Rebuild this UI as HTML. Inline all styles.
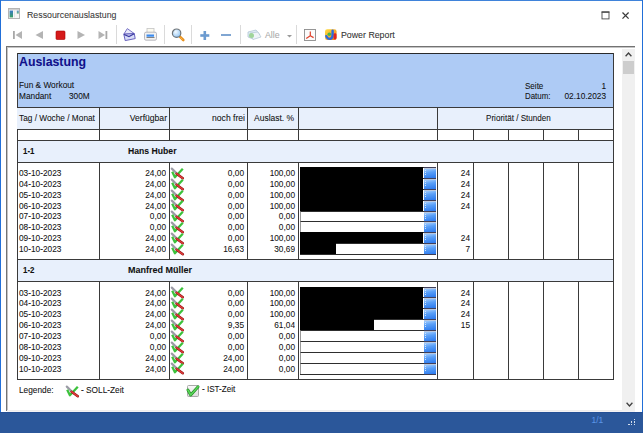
<!DOCTYPE html>
<html><head><meta charset="utf-8"><style>
html,body{margin:0;padding:0;}
body{width:643px;height:433px;overflow:hidden;background:#fff;position:relative;font-family:"Liberation Sans",sans-serif;color:#111;}
div{position:absolute;}
.t{white-space:pre;line-height:1;-webkit-text-stroke:0.07px currentColor;}
svg{position:absolute;overflow:visible;}
</style></head><body>
<div style="left:0px;top:0px;width:643px;height:1px;background:#3f83da"></div>
<div style="left:0px;top:0px;width:1px;height:433px;background:#216fd8"></div>
<div style="left:642px;top:0px;width:1px;height:433px;background:#216fd8"></div>
<svg style="left:8px;top:8px" width="12" height="11" viewBox="0 0 12 11">
<defs><linearGradient id="ti" x1="0" y1="0" x2="0" y2="1"><stop offset="0" stop-color="#3a78c8"/><stop offset="1" stop-color="#3aa060"/></linearGradient></defs>
<rect x="0.5" y="0.5" width="11" height="10" fill="#f6f6f6" stroke="#b4b4b4"/>
<rect x="1" y="1" width="10" height="1.2" fill="#d0d0d0"/>
<rect x="1.6" y="2.6" width="3.4" height="6.8" fill="url(#ti)"/>
<rect x="6.2" y="2.6" width="0.8" height="6.8" fill="#e0e0e0"/>
<rect x="8.8" y="2.6" width="2" height="3" fill="url(#ti)" opacity="0.8"/>
</svg>
<div class="t" style="left:27px;top:10.85px;font-size:8.8px;color:#3a3a3a">Ressourcenauslastung</div>
<svg style="left:601px;top:11px" width="9" height="9" viewBox="0 0 9 9">
<rect x="1" y="0.9" width="7" height="7" fill="none" stroke="#4a4a4a" stroke-width="0.9"/>
<rect x="0.6" y="0.5" width="7.8" height="1.3" fill="#4a4a4a"/>
</svg>
<svg style="left:622px;top:11.8px" width="7" height="7" viewBox="0 0 7 7">
<path d="M0.5 0.5 L6.6 6.6 M6.6 0.5 L0.5 6.6" stroke="#3a3a3a" stroke-width="1.25"/>
</svg>
<svg style="left:13px;top:31px" width="10" height="9" viewBox="0 0 10 9">
<rect x="0" y="0" width="1.8" height="8" fill="#a8a8a8"/><path d="M9 0 L2.5 4 L9 8 Z" fill="#b4b4b4"/></svg>
<svg style="left:35px;top:31px" width="9" height="9" viewBox="0 0 9 9">
<path d="M8 0 L0.5 4 L8 8 Z" fill="#b4b4b4"/></svg>
<svg style="left:55.5px;top:31px" width="9" height="9" viewBox="0 0 9 9">
<rect x="0" y="0" width="9" height="8.5" rx="1" fill="#d51a1a" stroke="#a00" stroke-width="0.6"/></svg>
<svg style="left:77px;top:31px" width="9" height="9" viewBox="0 0 9 9">
<path d="M0.5 0 L8 4 L0.5 8 Z" fill="#b4b4b4"/></svg>
<svg style="left:97.5px;top:31px" width="10" height="9" viewBox="0 0 10 9">
<path d="M0.5 0 L7 4 L0.5 8 Z" fill="#b4b4b4"/><rect x="7.5" y="0" width="1.8" height="8" fill="#a8a8a8"/></svg>
<div style="left:116px;top:25px;width:1px;height:19px;background:#dadada"></div>
<div style="left:164px;top:25px;width:1px;height:19px;background:#dadada"></div>
<div style="left:191px;top:25px;width:1px;height:19px;background:#dadada"></div>
<div style="left:240px;top:25px;width:1px;height:19px;background:#dadada"></div>
<div style="left:296px;top:25px;width:1px;height:19px;background:#dadada"></div>
<svg style="left:122px;top:27px" width="15" height="15" viewBox="0 0 15 15">
<path d="M1.8 7.2 L5.3 1.6 L12.3 6.6 Z" fill="#e8e8fa" stroke="#6a64c0" stroke-width="0.9" stroke-linejoin="round"/>
<path d="M1.8 7.2 L12.3 6.6 L13.2 11.6 L3.2 13.6 Z" fill="#d8dcf8" stroke="#5a54b8" stroke-width="0.9" stroke-linejoin="round"/>
<path d="M2 7.4 L7 9.6 L12.2 6.8" fill="none" stroke="#3a3aa0" stroke-width="1.1"/>
</svg>
<svg style="left:144px;top:28px" width="13" height="13" viewBox="0 0 13 13">
<rect x="3" y="0.5" width="7" height="5" fill="#fbfaf0" stroke="#c4c4c4" stroke-width="0.8"/>
<rect x="0.5" y="4.2" width="12" height="8" rx="1.5" fill="#f2f2f2" stroke="#a8a8b0" stroke-width="0.8"/>
<rect x="2.5" y="6.5" width="7.5" height="2.2" fill="#3c8cf0"/>
<rect x="2.5" y="9" width="8" height="0.8" fill="#666"/>
</svg>
<svg style="left:170.5px;top:28px" width="14" height="13" viewBox="0 0 14 13">
<defs><radialGradient id="mg" cx="0.4" cy="0.35" r="0.7"><stop offset="0" stop-color="#f4faff"/><stop offset="1" stop-color="#8ec4f4"/></radialGradient></defs>
<path d="M8.6 8.4 L12.3 12" stroke="#e8901c" stroke-width="2.6" stroke-linecap="round"/>
<path d="M9.4 9.6 L11.6 11.6" stroke="#ffc060" stroke-width="0.8"/>
<circle cx="5.6" cy="5.2" r="4.2" fill="url(#mg)" stroke="#6f7478" stroke-width="1.2"/>
</svg>
<svg style="left:200px;top:30.5px" width="10" height="9" viewBox="0 0 10 9">
<rect x="0.3" y="3.2" width="9" height="2.6" fill="#6c9bd0"/><rect x="3.5" y="0" width="2.6" height="9" fill="#6c9bd0"/></svg>
<div style="left:221px;top:33.5px;width:9.5px;height:2.6px;background:#80a6d2"></div>
<svg style="left:247px;top:29px" width="15" height="11" viewBox="0 0 15 11">
<path d="M1 3 L9 1 L13 6 L6 10 L1 8 Z" fill="#e2edf5" stroke="#a7bfd0" stroke-width="0.7"/>
<path d="M3 4 L11 3 L14 8 L6 10.5 Z" fill="#eef4f8" stroke="#b0c4d4" stroke-width="0.7"/>
<circle cx="4.5" cy="6.5" r="2.5" fill="#9fd49a"/>
</svg>
<div class="t" style="left:265px;top:30.55px;font-size:8.8px;color:#a9a9a9">Alle</div>
<svg style="left:287px;top:35px" width="5" height="3" viewBox="0 0 5 3"><path d="M0 0 L5 0 L2.5 2.5 Z" fill="#9a9a9a"/></svg>
<svg style="left:304px;top:28.5px" width="12" height="12" viewBox="0 0 12 12">
<rect x="0.5" y="0.5" width="11" height="11" fill="#fbfbfb" stroke="#8c8c8c" stroke-width="0.9"/>
<path d="M6.3 2.5 L6.3 6.8 L2.2 9.4 M6.3 6.8 L9.6 8.6" fill="none" stroke="#e0402a" stroke-width="1.2" stroke-linejoin="round"/>
</svg>
<svg style="left:325px;top:29px" width="12" height="11" viewBox="0 0 12 11">
<defs><linearGradient id="pr" x1="0" y1="0" x2="1" y2="1"><stop offset="0" stop-color="#ffe040"/><stop offset="1" stop-color="#f07a20"/></linearGradient></defs>
<rect x="0" y="0.3" width="11.6" height="10.7" rx="2.2" fill="url(#pr)"/>
<circle cx="4.3" cy="5.2" r="1.8" fill="#48b848"/>
<path d="M1.3 7.2 Q2.5 10.4 5.5 9.8 Q7.6 9.2 7.6 6 L7.6 1.8" fill="none" stroke="#2a6ae0" stroke-width="2.4" stroke-linecap="round"/>
<rect x="8.6" y="4.3" width="2.9" height="6.2" rx="1.4" fill="#e02424"/>
</svg>
<div class="t" style="left:341px;top:30.55px;font-size:8.8px;color:#333">Power Report</div>
<div style="left:6px;top:46px;width:629px;height:1px;background:#737373"></div>
<div style="left:6px;top:47px;width:629px;height:1px;background:#c4c4c4"></div>
<div style="left:6px;top:46px;width:1px;height:365px;background:#737373"></div>
<div style="left:7px;top:47px;width:1px;height:364px;background:#c4c4c4"></div>
<div style="left:622px;top:49px;width:13px;height:362px;background:#f0f0f0"></div>
<svg style="left:625.3px;top:52.3px" width="7" height="5" viewBox="0 0 7 5"><path d="M0.6 4.2 L3.5 1 L6.4 4.2" fill="none" stroke="#404040" stroke-width="1.3"/></svg>
<div style="left:623px;top:61px;width:11px;height:13px;background:#cdcdcd"></div>
<svg style="left:625.5px;top:401.5px" width="7" height="5" viewBox="0 0 7 5"><path d="M0.6 0.8 L3.5 4 L6.4 0.8" fill="none" stroke="#404040" stroke-width="1.3"/></svg>
<div style="left:7px;top:410px;width:615px;height:1px;background:#efeded"></div>
<div style="left:7px;top:411px;width:628px;height:1px;background:#f4f2f4"></div>
<div style="left:0px;top:412px;width:643px;height:21px;background:#2b579a"></div>
<div style="left:0px;top:412px;width:643px;height:1px;background:#244f95"></div>
<div class="t" style="left:591.5px;top:416.29px;font-size:8.4px;color:#5b95e6">1/1</div>
<div style="left:628px;top:423.5px;width:1.5px;height:1.5px;background:#d4deec"></div>
<div style="left:630.8px;top:423.5px;width:1.5px;height:1.5px;background:#d4deec"></div>
<div style="left:633.6px;top:423.5px;width:1.5px;height:1.5px;background:#d4deec"></div>
<div style="left:630.8px;top:421px;width:1.5px;height:1.5px;background:#d4deec"></div>
<div style="left:633.6px;top:421px;width:1.5px;height:1.5px;background:#d4deec"></div>
<div style="left:633.6px;top:418.5px;width:1.5px;height:1.5px;background:#d4deec"></div>
<div style="left:17px;top:53px;width:597px;height:55px;background:#aecbf5"></div>
<div style="left:17px;top:53px;width:597px;height:1px;background:#2a2a2a"></div>
<div style="left:17px;top:53px;width:1px;height:327px;background:#3a3a3a"></div>
<div style="left:613px;top:53px;width:1px;height:327px;background:#3a3a3a"></div>
<div class="t" style="left:19px;top:56.19px;font-size:12.3px;font-weight:bold;color:#10108a">Auslastung</div>
<div class="t" style="left:19px;top:80.90px;font-size:9.1px;transform:scaleX(0.9121);transform-origin:left 0;">Fun &amp; Workout</div>
<div class="t" style="left:19px;top:91.90px;font-size:9.1px;transform:scaleX(0.9121);transform-origin:left 0;">Mandant</div>
<div class="t" style="left:69.3px;top:91.90px;font-size:9.1px;transform:scaleX(0.9121);transform-origin:left 0;">300M</div>
<div class="t" style="left:524.5px;top:81.50px;font-size:9.1px;transform:scaleX(0.8846);transform-origin:left 0;">Seite</div>
<div class="t" style="left:405.5px;width:200px;text-align:right;top:81.50px;font-size:9.1px;transform:scaleX(0.9121);transform-origin:right 0;">1</div>
<div class="t" style="left:524.5px;top:92.40px;font-size:9.1px;transform:scaleX(0.8681);transform-origin:left 0;">Datum:</div>
<div class="t" style="left:406px;width:200px;text-align:right;top:92.40px;font-size:9.1px;transform:scaleX(0.9121);transform-origin:right 0;">02.10.2023</div>
<div style="left:17px;top:108px;width:596px;height:21px;background:#e8f0fc"></div>
<div style="left:17px;top:107px;width:597px;height:1px;background:#3a3a3a"></div>
<div style="left:17px;top:129px;width:597px;height:1px;background:#3a3a3a"></div>
<div style="left:17px;top:140px;width:597px;height:1px;background:#3a3a3a"></div>
<div style="left:99px;top:107px;width:1px;height:33px;background:#3a3a3a"></div>
<div style="left:169px;top:107px;width:1px;height:33px;background:#3a3a3a"></div>
<div style="left:247px;top:107px;width:1px;height:33px;background:#3a3a3a"></div>
<div style="left:298px;top:107px;width:1px;height:33px;background:#3a3a3a"></div>
<div style="left:437px;top:107px;width:1px;height:33px;background:#3a3a3a"></div>
<div style="left:473px;top:129px;width:1px;height:11px;background:#3a3a3a"></div>
<div style="left:508px;top:129px;width:1px;height:11px;background:#3a3a3a"></div>
<div style="left:543px;top:129px;width:1px;height:11px;background:#3a3a3a"></div>
<div style="left:578px;top:129px;width:1px;height:11px;background:#3a3a3a"></div>
<div class="t" style="left:19px;top:113.60px;font-size:9.1px;transform:scaleX(0.9121);transform-origin:left 0;">Tag / Woche / Monat</div>
<div class="t" style="left:-33.5px;width:200px;text-align:right;top:113.50px;font-size:9.1px;transform:scaleX(0.9451);transform-origin:right 0;">Verfügbar</div>
<div class="t" style="left:45px;width:200px;text-align:right;top:113.50px;font-size:9.1px;transform:scaleX(0.9451);transform-origin:right 0;">noch frei</div>
<div class="t" style="left:253.8px;top:113.50px;font-size:9.1px;transform:scaleX(0.9341);transform-origin:left 0;">Auslast. %</div>
<div class="t" style="left:486px;top:113.70px;font-size:9.1px;transform:scaleX(0.8901);transform-origin:left 0;">Priorität / Stunden</div>
<div style="left:18px;top:141px;width:595px;height:21px;background:#e8f0fc"></div>
<div style="left:17px;top:162px;width:597px;height:1px;background:#3a3a3a"></div>
<div class="t" style="left:23px;top:146.75px;font-size:8.8px;transform:scaleX(0.8977);transform-origin:left 0;font-weight:bold">1-1</div>
<div class="t" style="left:127.7px;top:146.70px;font-size:9.1px;transform:scaleX(0.9505);transform-origin:left 0;font-weight:bold">Hans Huber</div>
<div style="left:99px;top:162px;width:1px;height:97px;background:#3a3a3a"></div>
<div style="left:169px;top:162px;width:1px;height:97px;background:#3a3a3a"></div>
<div style="left:247px;top:162px;width:1px;height:97px;background:#3a3a3a"></div>
<div style="left:298px;top:162px;width:1px;height:97px;background:#3a3a3a"></div>
<div style="left:437px;top:162px;width:1px;height:97px;background:#3a3a3a"></div>
<div style="left:473px;top:162px;width:1px;height:97px;background:#3a3a3a"></div>
<div style="left:508px;top:162px;width:1px;height:97px;background:#3a3a3a"></div>
<div style="left:543px;top:162px;width:1px;height:97px;background:#3a3a3a"></div>
<div style="left:578px;top:162px;width:1px;height:97px;background:#3a3a3a"></div>
<div style="left:17px;top:259px;width:597px;height:1px;background:#3a3a3a"></div>
<div class="t" style="left:19px;top:169.01px;font-size:9.2px;transform:scaleX(0.9022);transform-origin:left 0;">03-10-2023</div>
<div class="t" style="left:-33.69999999999999px;width:200px;text-align:right;top:169.01px;font-size:9.2px;transform:scaleX(0.9022);transform-origin:right 0;">24,00</div>
<div class="t" style="left:44.30000000000001px;width:200px;text-align:right;top:169.01px;font-size:9.2px;transform:scaleX(0.9022);transform-origin:right 0;">0,00</div>
<div class="t" style="left:95.30000000000001px;width:200px;text-align:right;top:169.01px;font-size:9.2px;transform:scaleX(0.9022);transform-origin:right 0;">100,00</div>
<div class="t" style="left:270px;width:200px;text-align:right;top:169.01px;font-size:9.2px;transform:scaleX(0.9022);transform-origin:right 0;">24</div>
<svg style="left:171px;top:167.90px" width="13" height="11" viewBox="0 0 13 11"><path d="M0.8 0.6 L5.3 5" stroke="#9c9ca6" stroke-width="2.2" stroke-linecap="round"/><path d="M1.2 3.8 L3.9 9.3 L11.8 0.8" fill="none" stroke="#3cc23c" stroke-width="2.3" stroke-linejoin="round"/><path d="M5.6 5.7 L11.8 10.3" stroke="#8a1010" stroke-width="2.5" stroke-linecap="round"/><path d="M5.6 5.7 L11.8 10.3" stroke="#e03a3a" stroke-width="1.5" stroke-linecap="round"/></svg>
<div style="left:300px;top:167px;width:124px;height:11px;background:#fff;border-top:1px solid #2e2e2e;border-left:1px solid #9a9a9a;box-sizing:border-box"></div>
<div style="left:300px;top:167px;width:122.90px;height:11px;background:#000"></div>
<div style="left:424px;top:167px;width:12px;height:11px;background:linear-gradient(170deg,#b4d8ff,#5aa0f8 45%,#2a78ee);border-top:1px solid #40405a;box-sizing:border-box"></div>
<div style="left:424px;top:168px;width:12px;height:1px;background:#b8c8e0"></div>
<div style="left:425px;top:170px;width:1px;height:1px;background:#d0e2fa"></div>
<div style="left:425px;top:172px;width:1px;height:1px;background:#d0e2fa"></div>
<div style="left:425px;top:174px;width:1px;height:1px;background:#d0e2fa"></div>
<div class="t" style="left:19px;top:179.88px;font-size:9.2px;transform:scaleX(0.9022);transform-origin:left 0;">04-10-2023</div>
<div class="t" style="left:-33.69999999999999px;width:200px;text-align:right;top:179.88px;font-size:9.2px;transform:scaleX(0.9022);transform-origin:right 0;">24,00</div>
<div class="t" style="left:44.30000000000001px;width:200px;text-align:right;top:179.88px;font-size:9.2px;transform:scaleX(0.9022);transform-origin:right 0;">0,00</div>
<div class="t" style="left:95.30000000000001px;width:200px;text-align:right;top:179.88px;font-size:9.2px;transform:scaleX(0.9022);transform-origin:right 0;">100,00</div>
<div class="t" style="left:270px;width:200px;text-align:right;top:179.88px;font-size:9.2px;transform:scaleX(0.9022);transform-origin:right 0;">24</div>
<svg style="left:171px;top:178.75px" width="13" height="11" viewBox="0 0 13 11"><path d="M0.8 0.6 L5.3 5" stroke="#9c9ca6" stroke-width="2.2" stroke-linecap="round"/><path d="M1.2 3.8 L3.9 9.3 L11.8 0.8" fill="none" stroke="#3cc23c" stroke-width="2.3" stroke-linejoin="round"/><path d="M5.6 5.7 L11.8 10.3" stroke="#8a1010" stroke-width="2.5" stroke-linecap="round"/><path d="M5.6 5.7 L11.8 10.3" stroke="#e03a3a" stroke-width="1.5" stroke-linecap="round"/></svg>
<div style="left:300px;top:178px;width:124px;height:11px;background:#fff;border-top:1px solid #2e2e2e;border-left:1px solid #9a9a9a;box-sizing:border-box"></div>
<div style="left:300px;top:178px;width:122.90px;height:11px;background:#000"></div>
<div style="left:424px;top:178px;width:12px;height:11px;background:linear-gradient(170deg,#b4d8ff,#5aa0f8 45%,#2a78ee);border-top:1px solid #40405a;box-sizing:border-box"></div>
<div style="left:424px;top:179px;width:12px;height:1px;background:#b8c8e0"></div>
<div style="left:425px;top:181px;width:1px;height:1px;background:#d0e2fa"></div>
<div style="left:425px;top:183px;width:1px;height:1px;background:#d0e2fa"></div>
<div style="left:425px;top:185px;width:1px;height:1px;background:#d0e2fa"></div>
<div class="t" style="left:19px;top:190.75px;font-size:9.2px;transform:scaleX(0.9022);transform-origin:left 0;">05-10-2023</div>
<div class="t" style="left:-33.69999999999999px;width:200px;text-align:right;top:190.75px;font-size:9.2px;transform:scaleX(0.9022);transform-origin:right 0;">24,00</div>
<div class="t" style="left:44.30000000000001px;width:200px;text-align:right;top:190.75px;font-size:9.2px;transform:scaleX(0.9022);transform-origin:right 0;">0,00</div>
<div class="t" style="left:95.30000000000001px;width:200px;text-align:right;top:190.75px;font-size:9.2px;transform:scaleX(0.9022);transform-origin:right 0;">100,00</div>
<div class="t" style="left:270px;width:200px;text-align:right;top:190.75px;font-size:9.2px;transform:scaleX(0.9022);transform-origin:right 0;">24</div>
<svg style="left:171px;top:189.60px" width="13" height="11" viewBox="0 0 13 11"><path d="M0.8 0.6 L5.3 5" stroke="#9c9ca6" stroke-width="2.2" stroke-linecap="round"/><path d="M1.2 3.8 L3.9 9.3 L11.8 0.8" fill="none" stroke="#3cc23c" stroke-width="2.3" stroke-linejoin="round"/><path d="M5.6 5.7 L11.8 10.3" stroke="#8a1010" stroke-width="2.5" stroke-linecap="round"/><path d="M5.6 5.7 L11.8 10.3" stroke="#e03a3a" stroke-width="1.5" stroke-linecap="round"/></svg>
<div style="left:300px;top:189px;width:124px;height:11px;background:#fff;border-top:1px solid #2e2e2e;border-left:1px solid #9a9a9a;box-sizing:border-box"></div>
<div style="left:300px;top:189px;width:122.90px;height:11px;background:#000"></div>
<div style="left:424px;top:189px;width:12px;height:11px;background:linear-gradient(170deg,#b4d8ff,#5aa0f8 45%,#2a78ee);border-top:1px solid #40405a;box-sizing:border-box"></div>
<div style="left:424px;top:190px;width:12px;height:1px;background:#b8c8e0"></div>
<div style="left:425px;top:192px;width:1px;height:1px;background:#d0e2fa"></div>
<div style="left:425px;top:194px;width:1px;height:1px;background:#d0e2fa"></div>
<div style="left:425px;top:196px;width:1px;height:1px;background:#d0e2fa"></div>
<div class="t" style="left:19px;top:201.62px;font-size:9.2px;transform:scaleX(0.9022);transform-origin:left 0;">06-10-2023</div>
<div class="t" style="left:-33.69999999999999px;width:200px;text-align:right;top:201.62px;font-size:9.2px;transform:scaleX(0.9022);transform-origin:right 0;">24,00</div>
<div class="t" style="left:44.30000000000001px;width:200px;text-align:right;top:201.62px;font-size:9.2px;transform:scaleX(0.9022);transform-origin:right 0;">0,00</div>
<div class="t" style="left:95.30000000000001px;width:200px;text-align:right;top:201.62px;font-size:9.2px;transform:scaleX(0.9022);transform-origin:right 0;">100,00</div>
<div class="t" style="left:270px;width:200px;text-align:right;top:201.62px;font-size:9.2px;transform:scaleX(0.9022);transform-origin:right 0;">24</div>
<svg style="left:171px;top:200.45px" width="13" height="11" viewBox="0 0 13 11"><path d="M0.8 0.6 L5.3 5" stroke="#9c9ca6" stroke-width="2.2" stroke-linecap="round"/><path d="M1.2 3.8 L3.9 9.3 L11.8 0.8" fill="none" stroke="#3cc23c" stroke-width="2.3" stroke-linejoin="round"/><path d="M5.6 5.7 L11.8 10.3" stroke="#8a1010" stroke-width="2.5" stroke-linecap="round"/><path d="M5.6 5.7 L11.8 10.3" stroke="#e03a3a" stroke-width="1.5" stroke-linecap="round"/></svg>
<div style="left:300px;top:200px;width:124px;height:11px;background:#fff;border-top:1px solid #2e2e2e;border-left:1px solid #9a9a9a;box-sizing:border-box"></div>
<div style="left:300px;top:200px;width:122.90px;height:11px;background:#000"></div>
<div style="left:424px;top:200px;width:12px;height:11px;background:linear-gradient(170deg,#b4d8ff,#5aa0f8 45%,#2a78ee);border-top:1px solid #40405a;box-sizing:border-box"></div>
<div style="left:424px;top:201px;width:12px;height:1px;background:#b8c8e0"></div>
<div style="left:425px;top:203px;width:1px;height:1px;background:#d0e2fa"></div>
<div style="left:425px;top:205px;width:1px;height:1px;background:#d0e2fa"></div>
<div style="left:425px;top:207px;width:1px;height:1px;background:#d0e2fa"></div>
<div class="t" style="left:19px;top:212.49px;font-size:9.2px;transform:scaleX(0.9022);transform-origin:left 0;">07-10-2023</div>
<div class="t" style="left:-33.69999999999999px;width:200px;text-align:right;top:212.49px;font-size:9.2px;transform:scaleX(0.9022);transform-origin:right 0;">0,00</div>
<div class="t" style="left:44.30000000000001px;width:200px;text-align:right;top:212.49px;font-size:9.2px;transform:scaleX(0.9022);transform-origin:right 0;">0,00</div>
<div class="t" style="left:95.30000000000001px;width:200px;text-align:right;top:212.49px;font-size:9.2px;transform:scaleX(0.9022);transform-origin:right 0;">0,00</div>
<svg style="left:171px;top:211.30px" width="13" height="11" viewBox="0 0 13 11"><path d="M0.8 0.6 L5.3 5" stroke="#9c9ca6" stroke-width="2.2" stroke-linecap="round"/><path d="M1.2 3.8 L3.9 9.3 L11.8 0.8" fill="none" stroke="#3cc23c" stroke-width="2.3" stroke-linejoin="round"/><path d="M5.6 5.7 L11.8 10.3" stroke="#8a1010" stroke-width="2.5" stroke-linecap="round"/><path d="M5.6 5.7 L11.8 10.3" stroke="#e03a3a" stroke-width="1.5" stroke-linecap="round"/></svg>
<div style="left:300px;top:211px;width:124px;height:10px;background:#fff;border-top:1px solid #2e2e2e;border-left:1px solid #9a9a9a;box-sizing:border-box"></div>
<div style="left:424px;top:211px;width:12px;height:10px;background:linear-gradient(170deg,#b4d8ff,#5aa0f8 45%,#2a78ee);border-top:1px solid #40405a;box-sizing:border-box"></div>
<div style="left:424px;top:212px;width:12px;height:1px;background:#b8c8e0"></div>
<div style="left:425px;top:214px;width:1px;height:1px;background:#d0e2fa"></div>
<div style="left:425px;top:216px;width:1px;height:1px;background:#d0e2fa"></div>
<div style="left:425px;top:218px;width:1px;height:1px;background:#d0e2fa"></div>
<div class="t" style="left:19px;top:223.36px;font-size:9.2px;transform:scaleX(0.9022);transform-origin:left 0;">08-10-2023</div>
<div class="t" style="left:-33.69999999999999px;width:200px;text-align:right;top:223.36px;font-size:9.2px;transform:scaleX(0.9022);transform-origin:right 0;">0,00</div>
<div class="t" style="left:44.30000000000001px;width:200px;text-align:right;top:223.36px;font-size:9.2px;transform:scaleX(0.9022);transform-origin:right 0;">0,00</div>
<div class="t" style="left:95.30000000000001px;width:200px;text-align:right;top:223.36px;font-size:9.2px;transform:scaleX(0.9022);transform-origin:right 0;">0,00</div>
<svg style="left:171px;top:222.15px" width="13" height="11" viewBox="0 0 13 11"><path d="M0.8 0.6 L5.3 5" stroke="#9c9ca6" stroke-width="2.2" stroke-linecap="round"/><path d="M1.2 3.8 L3.9 9.3 L11.8 0.8" fill="none" stroke="#3cc23c" stroke-width="2.3" stroke-linejoin="round"/><path d="M5.6 5.7 L11.8 10.3" stroke="#8a1010" stroke-width="2.5" stroke-linecap="round"/><path d="M5.6 5.7 L11.8 10.3" stroke="#e03a3a" stroke-width="1.5" stroke-linecap="round"/></svg>
<div style="left:300px;top:221px;width:124px;height:11px;background:#fff;border-top:1px solid #2e2e2e;border-left:1px solid #9a9a9a;box-sizing:border-box"></div>
<div style="left:424px;top:221px;width:12px;height:11px;background:linear-gradient(170deg,#b4d8ff,#5aa0f8 45%,#2a78ee);border-top:1px solid #40405a;box-sizing:border-box"></div>
<div style="left:424px;top:222px;width:12px;height:1px;background:#b8c8e0"></div>
<div style="left:425px;top:224px;width:1px;height:1px;background:#d0e2fa"></div>
<div style="left:425px;top:226px;width:1px;height:1px;background:#d0e2fa"></div>
<div style="left:425px;top:228px;width:1px;height:1px;background:#d0e2fa"></div>
<div class="t" style="left:19px;top:234.23px;font-size:9.2px;transform:scaleX(0.9022);transform-origin:left 0;">09-10-2023</div>
<div class="t" style="left:-33.69999999999999px;width:200px;text-align:right;top:234.23px;font-size:9.2px;transform:scaleX(0.9022);transform-origin:right 0;">24,00</div>
<div class="t" style="left:44.30000000000001px;width:200px;text-align:right;top:234.23px;font-size:9.2px;transform:scaleX(0.9022);transform-origin:right 0;">0,00</div>
<div class="t" style="left:95.30000000000001px;width:200px;text-align:right;top:234.23px;font-size:9.2px;transform:scaleX(0.9022);transform-origin:right 0;">100,00</div>
<div class="t" style="left:270px;width:200px;text-align:right;top:234.23px;font-size:9.2px;transform:scaleX(0.9022);transform-origin:right 0;">24</div>
<svg style="left:171px;top:233.00px" width="13" height="11" viewBox="0 0 13 11"><path d="M0.8 0.6 L5.3 5" stroke="#9c9ca6" stroke-width="2.2" stroke-linecap="round"/><path d="M1.2 3.8 L3.9 9.3 L11.8 0.8" fill="none" stroke="#3cc23c" stroke-width="2.3" stroke-linejoin="round"/><path d="M5.6 5.7 L11.8 10.3" stroke="#8a1010" stroke-width="2.5" stroke-linecap="round"/><path d="M5.6 5.7 L11.8 10.3" stroke="#e03a3a" stroke-width="1.5" stroke-linecap="round"/></svg>
<div style="left:300px;top:232px;width:124px;height:11px;background:#fff;border-top:1px solid #2e2e2e;border-left:1px solid #9a9a9a;box-sizing:border-box"></div>
<div style="left:300px;top:232px;width:122.90px;height:11px;background:#000"></div>
<div style="left:424px;top:232px;width:12px;height:11px;background:linear-gradient(170deg,#b4d8ff,#5aa0f8 45%,#2a78ee);border-top:1px solid #40405a;box-sizing:border-box"></div>
<div style="left:424px;top:233px;width:12px;height:1px;background:#b8c8e0"></div>
<div style="left:425px;top:235px;width:1px;height:1px;background:#d0e2fa"></div>
<div style="left:425px;top:237px;width:1px;height:1px;background:#d0e2fa"></div>
<div style="left:425px;top:239px;width:1px;height:1px;background:#d0e2fa"></div>
<div class="t" style="left:19px;top:245.10px;font-size:9.2px;transform:scaleX(0.9022);transform-origin:left 0;">10-10-2023</div>
<div class="t" style="left:-33.69999999999999px;width:200px;text-align:right;top:245.10px;font-size:9.2px;transform:scaleX(0.9022);transform-origin:right 0;">24,00</div>
<div class="t" style="left:44.30000000000001px;width:200px;text-align:right;top:245.10px;font-size:9.2px;transform:scaleX(0.9022);transform-origin:right 0;">16,63</div>
<div class="t" style="left:95.30000000000001px;width:200px;text-align:right;top:245.10px;font-size:9.2px;transform:scaleX(0.9022);transform-origin:right 0;">30,69</div>
<div class="t" style="left:270px;width:200px;text-align:right;top:245.10px;font-size:9.2px;transform:scaleX(0.9022);transform-origin:right 0;">7</div>
<svg style="left:171px;top:243.85px" width="13" height="11" viewBox="0 0 13 11"><path d="M0.8 0.6 L5.3 5" stroke="#9c9ca6" stroke-width="2.2" stroke-linecap="round"/><path d="M1.2 3.8 L3.9 9.3 L11.8 0.8" fill="none" stroke="#3cc23c" stroke-width="2.3" stroke-linejoin="round"/><path d="M5.6 5.7 L11.8 10.3" stroke="#8a1010" stroke-width="2.5" stroke-linecap="round"/><path d="M5.6 5.7 L11.8 10.3" stroke="#e03a3a" stroke-width="1.5" stroke-linecap="round"/></svg>
<div style="left:300px;top:243px;width:124px;height:11px;background:#fff;border-top:1px solid #2e2e2e;border-left:1px solid #9a9a9a;box-sizing:border-box"></div>
<div style="left:300px;top:254px;width:124px;height:1px;background:#2e2e2e"></div>
<div style="left:300px;top:243px;width:36.12px;height:11px;background:#000"></div>
<div style="left:424px;top:243px;width:12px;height:11px;background:linear-gradient(170deg,#b4d8ff,#5aa0f8 45%,#2a78ee);border-top:1px solid #40405a;box-sizing:border-box"></div>
<div style="left:424px;top:244px;width:12px;height:1px;background:#b8c8e0"></div>
<div style="left:425px;top:246px;width:1px;height:1px;background:#d0e2fa"></div>
<div style="left:425px;top:248px;width:1px;height:1px;background:#d0e2fa"></div>
<div style="left:425px;top:250px;width:1px;height:1px;background:#d0e2fa"></div>
<div style="left:424px;top:254px;width:12px;height:1px;background:#3d3d55"></div>
<div style="left:18px;top:260px;width:595px;height:21px;background:#e8f0fc"></div>
<div style="left:17px;top:281px;width:597px;height:1px;background:#3a3a3a"></div>
<div class="t" style="left:23px;top:265.75px;font-size:8.8px;transform:scaleX(0.8977);transform-origin:left 0;font-weight:bold">1-2</div>
<div class="t" style="left:127.7px;top:265.70px;font-size:9.1px;transform:scaleX(0.9890);transform-origin:left 0;font-weight:bold">Manfred Müller</div>
<div style="left:99px;top:281px;width:1px;height:98px;background:#3a3a3a"></div>
<div style="left:169px;top:281px;width:1px;height:98px;background:#3a3a3a"></div>
<div style="left:247px;top:281px;width:1px;height:98px;background:#3a3a3a"></div>
<div style="left:298px;top:281px;width:1px;height:98px;background:#3a3a3a"></div>
<div style="left:437px;top:281px;width:1px;height:98px;background:#3a3a3a"></div>
<div style="left:473px;top:281px;width:1px;height:98px;background:#3a3a3a"></div>
<div style="left:508px;top:281px;width:1px;height:98px;background:#3a3a3a"></div>
<div style="left:543px;top:281px;width:1px;height:98px;background:#3a3a3a"></div>
<div style="left:578px;top:281px;width:1px;height:98px;background:#3a3a3a"></div>
<div style="left:17px;top:379px;width:597px;height:1px;background:#3a3a3a"></div>
<div class="t" style="left:19px;top:288.61px;font-size:9.2px;transform:scaleX(0.9022);transform-origin:left 0;">03-10-2023</div>
<div class="t" style="left:-33.69999999999999px;width:200px;text-align:right;top:288.61px;font-size:9.2px;transform:scaleX(0.9022);transform-origin:right 0;">24,00</div>
<div class="t" style="left:44.30000000000001px;width:200px;text-align:right;top:288.61px;font-size:9.2px;transform:scaleX(0.9022);transform-origin:right 0;">0,00</div>
<div class="t" style="left:95.30000000000001px;width:200px;text-align:right;top:288.61px;font-size:9.2px;transform:scaleX(0.9022);transform-origin:right 0;">100,00</div>
<div class="t" style="left:270px;width:200px;text-align:right;top:288.61px;font-size:9.2px;transform:scaleX(0.9022);transform-origin:right 0;">24</div>
<svg style="left:171px;top:287.40px" width="13" height="11" viewBox="0 0 13 11"><path d="M0.8 0.6 L5.3 5" stroke="#9c9ca6" stroke-width="2.2" stroke-linecap="round"/><path d="M1.2 3.8 L3.9 9.3 L11.8 0.8" fill="none" stroke="#3cc23c" stroke-width="2.3" stroke-linejoin="round"/><path d="M5.6 5.7 L11.8 10.3" stroke="#8a1010" stroke-width="2.5" stroke-linecap="round"/><path d="M5.6 5.7 L11.8 10.3" stroke="#e03a3a" stroke-width="1.5" stroke-linecap="round"/></svg>
<div style="left:300px;top:287px;width:124px;height:10px;background:#fff;border-top:1px solid #2e2e2e;border-left:1px solid #9a9a9a;box-sizing:border-box"></div>
<div style="left:300px;top:287px;width:122.90px;height:10px;background:#000"></div>
<div style="left:424px;top:287px;width:12px;height:10px;background:linear-gradient(170deg,#b4d8ff,#5aa0f8 45%,#2a78ee);border-top:1px solid #40405a;box-sizing:border-box"></div>
<div style="left:424px;top:288px;width:12px;height:1px;background:#b8c8e0"></div>
<div style="left:425px;top:290px;width:1px;height:1px;background:#d0e2fa"></div>
<div style="left:425px;top:292px;width:1px;height:1px;background:#d0e2fa"></div>
<div style="left:425px;top:294px;width:1px;height:1px;background:#d0e2fa"></div>
<div class="t" style="left:19px;top:299.48px;font-size:9.2px;transform:scaleX(0.9022);transform-origin:left 0;">04-10-2023</div>
<div class="t" style="left:-33.69999999999999px;width:200px;text-align:right;top:299.48px;font-size:9.2px;transform:scaleX(0.9022);transform-origin:right 0;">24,00</div>
<div class="t" style="left:44.30000000000001px;width:200px;text-align:right;top:299.48px;font-size:9.2px;transform:scaleX(0.9022);transform-origin:right 0;">0,00</div>
<div class="t" style="left:95.30000000000001px;width:200px;text-align:right;top:299.48px;font-size:9.2px;transform:scaleX(0.9022);transform-origin:right 0;">100,00</div>
<div class="t" style="left:270px;width:200px;text-align:right;top:299.48px;font-size:9.2px;transform:scaleX(0.9022);transform-origin:right 0;">24</div>
<svg style="left:171px;top:298.25px" width="13" height="11" viewBox="0 0 13 11"><path d="M0.8 0.6 L5.3 5" stroke="#9c9ca6" stroke-width="2.2" stroke-linecap="round"/><path d="M1.2 3.8 L3.9 9.3 L11.8 0.8" fill="none" stroke="#3cc23c" stroke-width="2.3" stroke-linejoin="round"/><path d="M5.6 5.7 L11.8 10.3" stroke="#8a1010" stroke-width="2.5" stroke-linecap="round"/><path d="M5.6 5.7 L11.8 10.3" stroke="#e03a3a" stroke-width="1.5" stroke-linecap="round"/></svg>
<div style="left:300px;top:297px;width:124px;height:11px;background:#fff;border-top:1px solid #2e2e2e;border-left:1px solid #9a9a9a;box-sizing:border-box"></div>
<div style="left:300px;top:297px;width:122.90px;height:11px;background:#000"></div>
<div style="left:424px;top:297px;width:12px;height:11px;background:linear-gradient(170deg,#b4d8ff,#5aa0f8 45%,#2a78ee);border-top:1px solid #40405a;box-sizing:border-box"></div>
<div style="left:424px;top:298px;width:12px;height:1px;background:#b8c8e0"></div>
<div style="left:425px;top:300px;width:1px;height:1px;background:#d0e2fa"></div>
<div style="left:425px;top:302px;width:1px;height:1px;background:#d0e2fa"></div>
<div style="left:425px;top:304px;width:1px;height:1px;background:#d0e2fa"></div>
<div class="t" style="left:19px;top:310.35px;font-size:9.2px;transform:scaleX(0.9022);transform-origin:left 0;">05-10-2023</div>
<div class="t" style="left:-33.69999999999999px;width:200px;text-align:right;top:310.35px;font-size:9.2px;transform:scaleX(0.9022);transform-origin:right 0;">24,00</div>
<div class="t" style="left:44.30000000000001px;width:200px;text-align:right;top:310.35px;font-size:9.2px;transform:scaleX(0.9022);transform-origin:right 0;">0,00</div>
<div class="t" style="left:95.30000000000001px;width:200px;text-align:right;top:310.35px;font-size:9.2px;transform:scaleX(0.9022);transform-origin:right 0;">100,00</div>
<div class="t" style="left:270px;width:200px;text-align:right;top:310.35px;font-size:9.2px;transform:scaleX(0.9022);transform-origin:right 0;">24</div>
<svg style="left:171px;top:309.10px" width="13" height="11" viewBox="0 0 13 11"><path d="M0.8 0.6 L5.3 5" stroke="#9c9ca6" stroke-width="2.2" stroke-linecap="round"/><path d="M1.2 3.8 L3.9 9.3 L11.8 0.8" fill="none" stroke="#3cc23c" stroke-width="2.3" stroke-linejoin="round"/><path d="M5.6 5.7 L11.8 10.3" stroke="#8a1010" stroke-width="2.5" stroke-linecap="round"/><path d="M5.6 5.7 L11.8 10.3" stroke="#e03a3a" stroke-width="1.5" stroke-linecap="round"/></svg>
<div style="left:300px;top:308px;width:124px;height:11px;background:#fff;border-top:1px solid #2e2e2e;border-left:1px solid #9a9a9a;box-sizing:border-box"></div>
<div style="left:300px;top:308px;width:122.90px;height:11px;background:#000"></div>
<div style="left:424px;top:308px;width:12px;height:11px;background:linear-gradient(170deg,#b4d8ff,#5aa0f8 45%,#2a78ee);border-top:1px solid #40405a;box-sizing:border-box"></div>
<div style="left:424px;top:309px;width:12px;height:1px;background:#b8c8e0"></div>
<div style="left:425px;top:311px;width:1px;height:1px;background:#d0e2fa"></div>
<div style="left:425px;top:313px;width:1px;height:1px;background:#d0e2fa"></div>
<div style="left:425px;top:315px;width:1px;height:1px;background:#d0e2fa"></div>
<div class="t" style="left:19px;top:321.22px;font-size:9.2px;transform:scaleX(0.9022);transform-origin:left 0;">06-10-2023</div>
<div class="t" style="left:-33.69999999999999px;width:200px;text-align:right;top:321.22px;font-size:9.2px;transform:scaleX(0.9022);transform-origin:right 0;">24,00</div>
<div class="t" style="left:44.30000000000001px;width:200px;text-align:right;top:321.22px;font-size:9.2px;transform:scaleX(0.9022);transform-origin:right 0;">9,35</div>
<div class="t" style="left:95.30000000000001px;width:200px;text-align:right;top:321.22px;font-size:9.2px;transform:scaleX(0.9022);transform-origin:right 0;">61,04</div>
<div class="t" style="left:270px;width:200px;text-align:right;top:321.22px;font-size:9.2px;transform:scaleX(0.9022);transform-origin:right 0;">15</div>
<svg style="left:171px;top:319.95px" width="13" height="11" viewBox="0 0 13 11"><path d="M0.8 0.6 L5.3 5" stroke="#9c9ca6" stroke-width="2.2" stroke-linecap="round"/><path d="M1.2 3.8 L3.9 9.3 L11.8 0.8" fill="none" stroke="#3cc23c" stroke-width="2.3" stroke-linejoin="round"/><path d="M5.6 5.7 L11.8 10.3" stroke="#8a1010" stroke-width="2.5" stroke-linecap="round"/><path d="M5.6 5.7 L11.8 10.3" stroke="#e03a3a" stroke-width="1.5" stroke-linecap="round"/></svg>
<div style="left:300px;top:319px;width:124px;height:11px;background:#fff;border-top:1px solid #2e2e2e;border-left:1px solid #9a9a9a;box-sizing:border-box"></div>
<div style="left:300px;top:319px;width:74.12px;height:11px;background:#000"></div>
<div style="left:424px;top:319px;width:12px;height:11px;background:linear-gradient(170deg,#b4d8ff,#5aa0f8 45%,#2a78ee);border-top:1px solid #40405a;box-sizing:border-box"></div>
<div style="left:424px;top:320px;width:12px;height:1px;background:#b8c8e0"></div>
<div style="left:425px;top:322px;width:1px;height:1px;background:#d0e2fa"></div>
<div style="left:425px;top:324px;width:1px;height:1px;background:#d0e2fa"></div>
<div style="left:425px;top:326px;width:1px;height:1px;background:#d0e2fa"></div>
<div class="t" style="left:19px;top:332.09px;font-size:9.2px;transform:scaleX(0.9022);transform-origin:left 0;">07-10-2023</div>
<div class="t" style="left:-33.69999999999999px;width:200px;text-align:right;top:332.09px;font-size:9.2px;transform:scaleX(0.9022);transform-origin:right 0;">0,00</div>
<div class="t" style="left:44.30000000000001px;width:200px;text-align:right;top:332.09px;font-size:9.2px;transform:scaleX(0.9022);transform-origin:right 0;">0,00</div>
<div class="t" style="left:95.30000000000001px;width:200px;text-align:right;top:332.09px;font-size:9.2px;transform:scaleX(0.9022);transform-origin:right 0;">0,00</div>
<svg style="left:171px;top:330.80px" width="13" height="11" viewBox="0 0 13 11"><path d="M0.8 0.6 L5.3 5" stroke="#9c9ca6" stroke-width="2.2" stroke-linecap="round"/><path d="M1.2 3.8 L3.9 9.3 L11.8 0.8" fill="none" stroke="#3cc23c" stroke-width="2.3" stroke-linejoin="round"/><path d="M5.6 5.7 L11.8 10.3" stroke="#8a1010" stroke-width="2.5" stroke-linecap="round"/><path d="M5.6 5.7 L11.8 10.3" stroke="#e03a3a" stroke-width="1.5" stroke-linecap="round"/></svg>
<div style="left:300px;top:330px;width:124px;height:11px;background:#fff;border-top:1px solid #2e2e2e;border-left:1px solid #9a9a9a;box-sizing:border-box"></div>
<div style="left:424px;top:330px;width:12px;height:11px;background:linear-gradient(170deg,#b4d8ff,#5aa0f8 45%,#2a78ee);border-top:1px solid #40405a;box-sizing:border-box"></div>
<div style="left:424px;top:331px;width:12px;height:1px;background:#b8c8e0"></div>
<div style="left:425px;top:333px;width:1px;height:1px;background:#d0e2fa"></div>
<div style="left:425px;top:335px;width:1px;height:1px;background:#d0e2fa"></div>
<div style="left:425px;top:337px;width:1px;height:1px;background:#d0e2fa"></div>
<div class="t" style="left:19px;top:342.96px;font-size:9.2px;transform:scaleX(0.9022);transform-origin:left 0;">08-10-2023</div>
<div class="t" style="left:-33.69999999999999px;width:200px;text-align:right;top:342.96px;font-size:9.2px;transform:scaleX(0.9022);transform-origin:right 0;">0,00</div>
<div class="t" style="left:44.30000000000001px;width:200px;text-align:right;top:342.96px;font-size:9.2px;transform:scaleX(0.9022);transform-origin:right 0;">0,00</div>
<div class="t" style="left:95.30000000000001px;width:200px;text-align:right;top:342.96px;font-size:9.2px;transform:scaleX(0.9022);transform-origin:right 0;">0,00</div>
<svg style="left:171px;top:341.65px" width="13" height="11" viewBox="0 0 13 11"><path d="M0.8 0.6 L5.3 5" stroke="#9c9ca6" stroke-width="2.2" stroke-linecap="round"/><path d="M1.2 3.8 L3.9 9.3 L11.8 0.8" fill="none" stroke="#3cc23c" stroke-width="2.3" stroke-linejoin="round"/><path d="M5.6 5.7 L11.8 10.3" stroke="#8a1010" stroke-width="2.5" stroke-linecap="round"/><path d="M5.6 5.7 L11.8 10.3" stroke="#e03a3a" stroke-width="1.5" stroke-linecap="round"/></svg>
<div style="left:300px;top:341px;width:124px;height:11px;background:#fff;border-top:1px solid #2e2e2e;border-left:1px solid #9a9a9a;box-sizing:border-box"></div>
<div style="left:424px;top:341px;width:12px;height:11px;background:linear-gradient(170deg,#b4d8ff,#5aa0f8 45%,#2a78ee);border-top:1px solid #40405a;box-sizing:border-box"></div>
<div style="left:424px;top:342px;width:12px;height:1px;background:#b8c8e0"></div>
<div style="left:425px;top:344px;width:1px;height:1px;background:#d0e2fa"></div>
<div style="left:425px;top:346px;width:1px;height:1px;background:#d0e2fa"></div>
<div style="left:425px;top:348px;width:1px;height:1px;background:#d0e2fa"></div>
<div class="t" style="left:19px;top:353.83px;font-size:9.2px;transform:scaleX(0.9022);transform-origin:left 0;">09-10-2023</div>
<div class="t" style="left:-33.69999999999999px;width:200px;text-align:right;top:353.83px;font-size:9.2px;transform:scaleX(0.9022);transform-origin:right 0;">24,00</div>
<div class="t" style="left:44.30000000000001px;width:200px;text-align:right;top:353.83px;font-size:9.2px;transform:scaleX(0.9022);transform-origin:right 0;">24,00</div>
<div class="t" style="left:95.30000000000001px;width:200px;text-align:right;top:353.83px;font-size:9.2px;transform:scaleX(0.9022);transform-origin:right 0;">0,00</div>
<svg style="left:171px;top:352.50px" width="13" height="11" viewBox="0 0 13 11"><path d="M0.8 0.6 L5.3 5" stroke="#9c9ca6" stroke-width="2.2" stroke-linecap="round"/><path d="M1.2 3.8 L3.9 9.3 L11.8 0.8" fill="none" stroke="#3cc23c" stroke-width="2.3" stroke-linejoin="round"/><path d="M5.6 5.7 L11.8 10.3" stroke="#8a1010" stroke-width="2.5" stroke-linecap="round"/><path d="M5.6 5.7 L11.8 10.3" stroke="#e03a3a" stroke-width="1.5" stroke-linecap="round"/></svg>
<div style="left:300px;top:352px;width:124px;height:11px;background:#fff;border-top:1px solid #2e2e2e;border-left:1px solid #9a9a9a;box-sizing:border-box"></div>
<div style="left:424px;top:352px;width:12px;height:11px;background:linear-gradient(170deg,#b4d8ff,#5aa0f8 45%,#2a78ee);border-top:1px solid #40405a;box-sizing:border-box"></div>
<div style="left:424px;top:353px;width:12px;height:1px;background:#b8c8e0"></div>
<div style="left:425px;top:355px;width:1px;height:1px;background:#d0e2fa"></div>
<div style="left:425px;top:357px;width:1px;height:1px;background:#d0e2fa"></div>
<div style="left:425px;top:359px;width:1px;height:1px;background:#d0e2fa"></div>
<div class="t" style="left:19px;top:364.70px;font-size:9.2px;transform:scaleX(0.9022);transform-origin:left 0;">10-10-2023</div>
<div class="t" style="left:-33.69999999999999px;width:200px;text-align:right;top:364.70px;font-size:9.2px;transform:scaleX(0.9022);transform-origin:right 0;">24,00</div>
<div class="t" style="left:44.30000000000001px;width:200px;text-align:right;top:364.70px;font-size:9.2px;transform:scaleX(0.9022);transform-origin:right 0;">24,00</div>
<div class="t" style="left:95.30000000000001px;width:200px;text-align:right;top:364.70px;font-size:9.2px;transform:scaleX(0.9022);transform-origin:right 0;">0,00</div>
<svg style="left:171px;top:363.35px" width="13" height="11" viewBox="0 0 13 11"><path d="M0.8 0.6 L5.3 5" stroke="#9c9ca6" stroke-width="2.2" stroke-linecap="round"/><path d="M1.2 3.8 L3.9 9.3 L11.8 0.8" fill="none" stroke="#3cc23c" stroke-width="2.3" stroke-linejoin="round"/><path d="M5.6 5.7 L11.8 10.3" stroke="#8a1010" stroke-width="2.5" stroke-linecap="round"/><path d="M5.6 5.7 L11.8 10.3" stroke="#e03a3a" stroke-width="1.5" stroke-linecap="round"/></svg>
<div style="left:300px;top:363px;width:124px;height:11px;background:#fff;border-top:1px solid #2e2e2e;border-left:1px solid #9a9a9a;box-sizing:border-box"></div>
<div style="left:300px;top:374px;width:124px;height:1px;background:#2e2e2e"></div>
<div style="left:424px;top:363px;width:12px;height:11px;background:linear-gradient(170deg,#b4d8ff,#5aa0f8 45%,#2a78ee);border-top:1px solid #40405a;box-sizing:border-box"></div>
<div style="left:424px;top:364px;width:12px;height:1px;background:#b8c8e0"></div>
<div style="left:425px;top:366px;width:1px;height:1px;background:#d0e2fa"></div>
<div style="left:425px;top:368px;width:1px;height:1px;background:#d0e2fa"></div>
<div style="left:425px;top:370px;width:1px;height:1px;background:#d0e2fa"></div>
<div style="left:424px;top:374px;width:12px;height:1px;background:#3d3d55"></div>
<div class="t" style="left:19px;top:385.70px;font-size:9.1px;transform:scaleX(0.9121);transform-origin:left 0;">Legende:</div>
<svg style="left:66px;top:385.5px" width="13" height="11" viewBox="0 0 13 11">
<path d="M0.8 0.6 L5.3 5" stroke="#9c9ca6" stroke-width="2.2" stroke-linecap="round"/><path d="M1.2 3.8 L3.9 9.3 L11.8 0.8" fill="none" stroke="#3cc23c" stroke-width="2.3" stroke-linejoin="round"/><path d="M5.6 5.7 L11.8 10.3" stroke="#8a1010" stroke-width="2.5" stroke-linecap="round"/><path d="M5.6 5.7 L11.8 10.3" stroke="#e03a3a" stroke-width="1.5" stroke-linecap="round"/></svg>
<div class="t" style="left:81px;top:385.80px;font-size:9.1px;transform:scaleX(0.9121);transform-origin:left 0;">- SOLL-Zeit</div>
<svg style="left:187px;top:384.5px" width="12" height="12" viewBox="0 0 12 12">
<defs><linearGradient id="cb" x1="0" y1="0" x2="0" y2="1"><stop offset="0" stop-color="#fafafa"/><stop offset="1" stop-color="#dcdcdc"/></linearGradient></defs>
<rect x="0.5" y="0.5" width="11" height="11" rx="1" fill="url(#cb)" stroke="#a0a0a0" stroke-width="0.9"/>
<path d="M0.9 5 L3.7 10 L11.1 1.7" fill="none" stroke="#1e8a1e" stroke-width="2.8" stroke-linejoin="round" stroke-linecap="round"/>
<path d="M0.9 5 L3.7 10 L11.1 1.7" fill="none" stroke="#5ad65a" stroke-width="1.6" stroke-linejoin="round" stroke-linecap="round"/>
</svg>
<div class="t" style="left:201.8px;top:385.30px;font-size:9.1px;transform:scaleX(0.8901);transform-origin:left 0;">- IST-Zeit</div>
</body></html>
